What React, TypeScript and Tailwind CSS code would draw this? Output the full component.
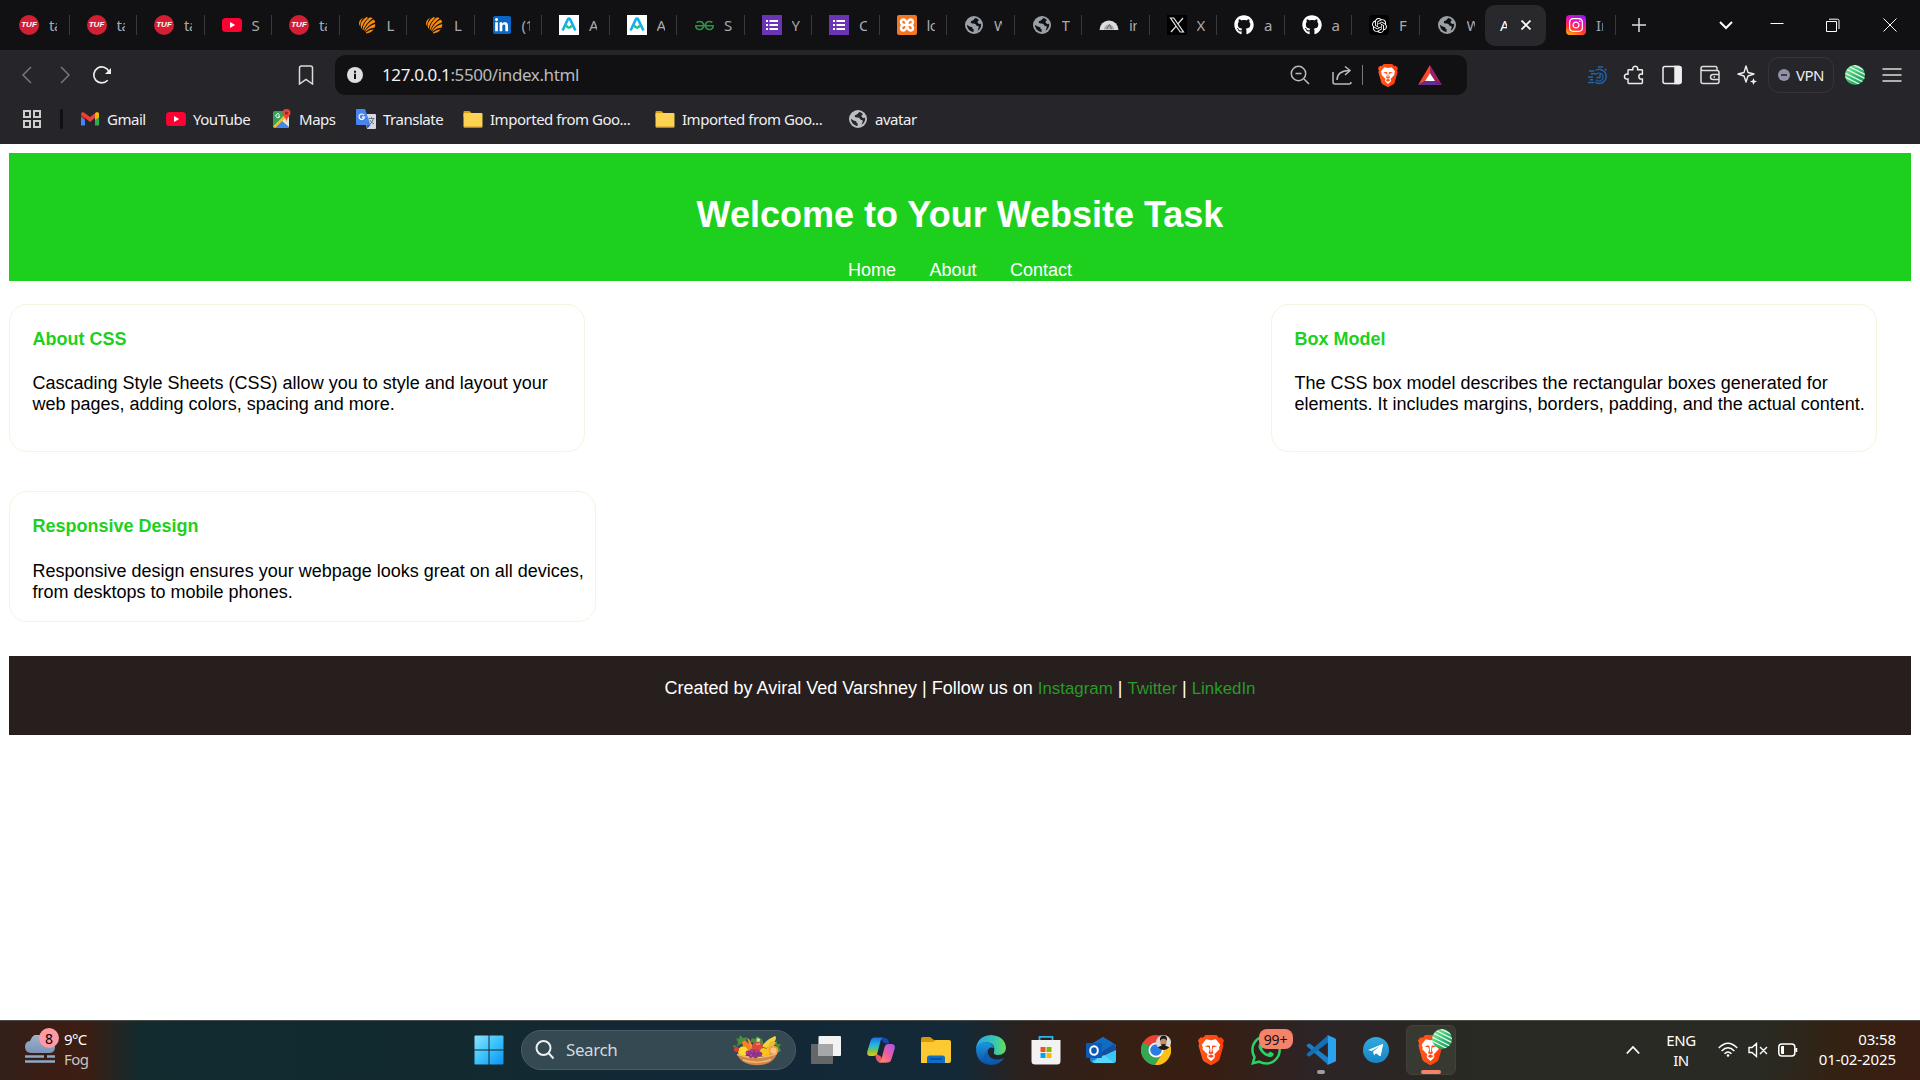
import React from "react";
import { FaGithub, FaLinkedinIn, FaInstagram } from "react-icons/fa";
import { SiOpenai, SiXampp, SiGeeksforgeeks, SiWhatsapp } from "react-icons/si";
import { PiPuzzlePiece } from "react-icons/pi";

/* ---------- Brand marks ---------- */

const Tuf = () => (
  <div className="flex size-5 items-center justify-center rounded-full bg-[#d21f34]">
    <span className="font-['Liberation_Sans'] text-[8px] font-bold italic leading-none text-white">TUF</span>
  </div>
);

const YouTube = () => (
  <svg viewBox="0 0 20 20" className="size-5">
    <rect y="3" width="20" height="14" rx="3.5" fill="#ff0033" />
    <path d="M8 7v6l5.2-3z" fill="#fff" />
  </svg>
);

const Shell = () => (
  <svg viewBox="0 0 20 20" className="size-5" fill="#f98a0c">
    <path d="M2.300 10Q1 5 6.500 2.500 3 6 3.200 11z" />
    <path d="M4 13Q2.500 6 10 1.800 11 2.500 10.500 3.500 5.500 8 4.800 13.500z" />
    <path d="M5.500 14.500Q6 8 12.500 2.500 15 2 15.500 3.500 9 8 6.300 15z" />
    <path d="M7 15.300Q10 8 16.500 4.500 18.300 5.500 18 7.500 11.500 9.500 7.700 15.800z" />
    <path d="M8.200 16.300Q12 10.500 18.200 9 18.500 11 17.500 12.800 12.500 13 8.700 16.700z" />
    <path d="M9 17.500Q12.500 14.500 16.800 14.200 14 18 9 18.500z" />
  </svg>
);

const LinkedIn = () => (
  <div className="flex size-[18px] items-center justify-center rounded-[2px] bg-[#0a66c2] text-white">
    <FaLinkedinIn size={15} />
  </div>
);

const ApnaA = () => (
  <svg viewBox="0 0 20 20" className="size-5">
    <rect width="20" height="20" fill="#fff" />
    <path d="M3.600 15.500 8.800 4.500Q10 2.800 11.200 4.500L16.400 15.500" fill="none" stroke="#12aef2" strokeWidth="2.600" />
    <path d="M7.200 10.500q2.800 4.500 5.600 0" fill="none" stroke="#1cc68a" strokeWidth="2.600" />
  </svg>
);

const Forms = () => (
  <svg viewBox="0 0 20 20" className="size-5">
    <rect width="20" height="20" fill="#6a35b5" />
    <path d="M4 5h2v2H4zM7.5 5H16v2H7.5zM4 9h2v2H4zM7.5 9H16v2H7.5zM4 13h2v2H4zM7.5 13H16v2H7.5z" fill="#fff" />
  </svg>
);

const Xampp = () => (
  <div className="flex size-5 items-center justify-center rounded-[2px] bg-[#f37623]">
    <svg viewBox="0 0 20 20" className="size-5" fill="none" stroke="#fff" strokeWidth="2.400">
      <path d="M6.500 4.500q-2.500 0-2.500 2.500t3 2.900h6q3-.4 3-2.900t-2.500-2.500Q11 4.500 10 10q-1 5.500-3.500 5.500T4 13t3-3.100M13 9.900q3 .6 3 3.100t-2.500 2.500Q11 15.500 10 10 9 4.500 6.500 4.500" />
    </svg>
  </div>
);

const Globe = ({ fill = "#9aa0a6", hole = "#111113" }: { fill?: string; hole?: string }) => (
  <svg viewBox="0 0 20 20" className="size-5">
    <circle cx="10" cy="10" r="9" fill={fill} />
    <path
      d="M11.5 2.9C9.8 3.6 10 5 8.8 5.6c-1 .5-1.8.2-2 1.2-.2 1.1.5 1.7 1.6 1.7 1.5 0 3.2 0 3.6 1.4.3 1.2 2 .6 2.6 1.6.6 1.1-.5 1.9-.6 2.9-.1.9-.7 1.6-1.4 2 3-1.200 5-4.400 4.500-7.600-.5 0-1 .3-1.700.1-1.200-.300-2.100-1.100-1.800-2.100.2-.8 1.200-1 1.300-1.700-.8-1-2.100-1.900-3.400-2.200zM2.900 9.700c.3 3.800 3 6.900 6.700 7.400 0-.9-.1-1.700.3-2.500-1.200-.4-1.700-1.100-1.600-2.300-1.600-.3-3.400-1-5.400-2.600z"
      fill={hole}
    />
  </svg>
);

const Dome = () => (
  <svg viewBox="0 0 20 20" className="size-5">
    <path d="M0.500 15a9.500 9.500 0 0 1 19 0z" fill="#dcdcdc" />
    <path d="M5 14.500a5 5 0 0 1 10 0z" fill="#aaa" />
    <path d="M7.500 14 10.500 9.500 12.500 14" stroke="#666" fill="none" />
  </svg>
);

const XLogo = () => (
  <svg viewBox="0 0 20 20" className="size-5">
    <rect width="20" height="20" fill="#000" />
    <path d="M3.500 3h3.300l9.700 14h-3.300zM16 3l-5.500 6.300M9 11.300 4 17" fill="none" stroke="#e8e8e8" strokeWidth="1.200" />
  </svg>
);

const OpenAi = () => (
  <div className="flex size-5 items-center justify-center rounded bg-black text-white">
    <SiOpenai size={15} />
  </div>
);

const Insta = () => (
  <div className="flex size-5 items-center justify-center rounded-[4px] bg-[linear-gradient(200deg,#8a1cf5_5%,#f70fa8_40%,#ff3a2c_68%,#ffc400_100%)] text-white">
    <FaInstagram size={16} />
  </div>
);

const Brave = ({ w, h }: { w: number; h: number }) => (
  <svg viewBox="0 0 24 28" width={w} height={h} preserveAspectRatio="none">
    <defs>
      <linearGradient id="brave" x1="0" x2="1">
        <stop offset="0" stopColor="#ff5a1c" />
        <stop offset="1" stopColor="#ff3a0a" />
      </linearGradient>
    </defs>
    <path d="M7 0h10l2.500 2.500 2-.5L24 5l-1 3 .5 2-3.500 12.500q-.5 1.500-2 2.500l-5 2.800q-1 .4-2 0L6 25q-1.500-1-2-2.500L.5 10 1 8 0 5l2.500-3 2 .5z" fill="url(#brave)" />
    <path d="M7.500 4 12 4.800 16.500 4l4 5-1 2.500.3 1.700-4.800 5 .8 1.500-.8 2-3 2.500-3-2.500-.8-2 .8-1.500-4.800-5 .3-1.700-1-2.500z" fill="#fff" />
    <path d="M6 10.500l4 1 .7 2-1 3.500 2.300 1 2.300-1-1-3.500.7-2 4-1-3-.8-3 .3-3-.3zM9 19.500l3-1.200 3 1.200-3 2z" fill="#ff4a14" />
    <path d="M10.800 8h2.400L12.500 16h-1z" fill="#fff" />
  </svg>
);

const Striped = () => (
  <svg viewBox="0 0 20 20" className="size-5">
    <defs>
      <linearGradient id="stripeFill" x1="0" x2="1" y2="1">
        <stop stopColor="#9cf0a5" />
        <stop offset=".5" stopColor="#35bd72" />
        <stop offset="1" stopColor="#168b55" />
      </linearGradient>
      <clipPath id="stripeClip"><circle cx="10" cy="10" r="10" /></clipPath>
    </defs>
    <g clipPath="url(#stripeClip)">
      <rect width="20" height="20" fill="url(#stripeFill)" />
      <path d="M5-2 23 7M1 0 22 10.500M-1 3 21 14M-2 7 20 18M-2 11 16 20" stroke="#e2fbe6" strokeWidth="1.300" />
    </g>
  </svg>
);

/* ---------- Tab strip ---------- */

const tabs: { icon: React.ReactNode; text: string }[] = [
  { icon: <Tuf />, text: "ta" },
  { icon: <Tuf />, text: "ta" },
  { icon: <Tuf />, text: "ta" },
  { icon: <YouTube />, text: "S" },
  { icon: <Tuf />, text: "ta" },
  { icon: <Shell />, text: "L" },
  { icon: <Shell />, text: "L" },
  { icon: <LinkedIn />, text: "(1" },
  { icon: <ApnaA />, text: "A" },
  { icon: <ApnaA />, text: "A" },
  { icon: <SiGeeksforgeeks size={19} color="#2f8d46" />, text: "S" },
  { icon: <Forms />, text: "Y" },
  { icon: <Forms />, text: "C" },
  { icon: <Xampp />, text: "lo" },
  { icon: <Globe />, text: "W" },
  { icon: <Globe />, text: "T" },
  { icon: <Dome />, text: "in" },
  { icon: <XLogo />, text: "X" },
  { icon: <FaGithub size={20} color="#fff" />, text: "a" },
  { icon: <FaGithub size={20} color="#fff" />, text: "a" },
  { icon: <OpenAi />, text: "F" },
  { icon: <Globe />, text: "W" },
];

function TabStrip() {
  return (
    <div className="flex h-[50px] items-center bg-[#111113] pl-[2px]">
      {tabs.map((t, i) => (
        <div key={i} className="flex w-[67.5px] shrink-0 items-center pl-[17px]">
          <div className="flex size-5 shrink-0 items-center justify-center">{t.icon}</div>
          <span className="ml-[10px] w-[8px] overflow-hidden whitespace-nowrap text-[15px] leading-5 tracking-[-0.5px] text-[#a9a9ad]">{t.text}</span>
          {i < 21 && <div className="ml-auto h-5 w-px bg-[#3a3a3e]" />}
        </div>
      ))}
      <div className="-ml-[2px] flex h-[41px] w-[61px] shrink-0 items-center rounded-[10px] bg-[#28282d] pl-[15px]">
        <span className="w-[7px] overflow-hidden text-[15px] leading-5 text-white">A</span>
        <svg viewBox="0 0 10 10" className="ml-[14px] size-[10px]" stroke="#fff" strokeWidth="1.7"><path d="M.5.500 9.500 9.500M9.500.500.500 9.500" /></svg>
      </div>
      <div className="flex w-[70px] shrink-0 items-center pl-5">
        <Insta />
        <span className="ml-[10px] w-[7px] overflow-hidden whitespace-nowrap text-[15px] leading-5 text-[#a4a4a8]">In</span>
        <div className="ml-auto h-5 w-px bg-[#3a3a3e]" />
      </div>
      <svg viewBox="0 0 14 14" className="ml-[16px] size-[14px]" stroke="#ddd" strokeWidth="1.500"><path d="M7 0v14M0 7h14" /></svg>
      <svg viewBox="0 0 14 14" className="ml-[73px] size-[14px]" stroke="#fff" strokeWidth="2" fill="none"><path d="M1 4l6 6 6-6" /></svg>
      <svg viewBox="0 0 14 14" className="ml-[37px] size-[14px]" stroke="#fff"><path d="M.5 5.500h13" /></svg>
      <svg viewBox="0 0 14 14" className="ml-[42px] size-[14px]" stroke="#fff" fill="none"><path d="M.5 3.500h10v10H.5zM3 1.200h8.500q1.500 0 1.500 1.500V11" /></svg>
      <svg viewBox="0 0 14 14" className="ml-[43px] size-[14px]" stroke="#fff"><path d="M.5.500l13 13M13.500.500l-13 13" /></svg>
    </div>
  );
}

/* ---------- Address row ---------- */

function Toolbar() {
  return (
    <div className="flex h-[50px] items-center pl-[20px]">
      <svg viewBox="0 0 14 20" className="h-5 w-[14px]" stroke="#77777c" strokeWidth="1.500" fill="none"><path d="M11 2 3 10l8 8" /></svg>
      <svg viewBox="0 0 14 20" className="ml-[24px] h-5 w-[14px]" stroke="#77777c" strokeWidth="1.500" fill="none"><path d="M3 2l8 8-8 8" /></svg>
      <svg viewBox="0 0 20 20" className="ml-[20px] size-5" stroke="#eee" strokeWidth="1.700" fill="none">
        <path d="M15.700 15.300A8 8 0 1 1 17 6.500" /><path d="M19 3v6h-6z" fill="#eee" stroke="none" />
      </svg>
      <svg viewBox="0 0 16 20" className="ml-[186px] h-5 w-4" stroke="#ddd" strokeWidth="1.500" fill="none"><path d="M1.500 3q0-2 2-2h9q2 0 2 2v16L8 14.500 1.500 19z" /></svg>
      <div className="ml-[21px] flex h-10 w-[1132px] items-center rounded-[10px] bg-[#111113] pl-[12px]">
        <svg viewBox="0 0 16 16" className="size-4"><circle cx="8" cy="8" r="8" fill="#dddde2" /><path d="M7 6.800h2V12H7zM7 3.700h2v2H7z" fill="#111" /></svg>
        <div className="ml-[19px] w-[220px] whitespace-nowrap text-[17px] leading-6 tracking-[-0.4px] text-[#b9b9bf]">
          <span className="text-[#f0f0f2]">127.0.0.1</span>:5500/index.html
        </div>
        <svg viewBox="0 0 20 20" className="ml-[688px] size-5" stroke="#bbb" strokeWidth="1.500" fill="none"><circle cx="8.500" cy="8.500" r="7.200" /><path d="M14 14l5 5M5.500 8.500h6" /></svg>
        <svg viewBox="0 0 20 20" className="ml-[22px] size-5" stroke="#bbb" strokeWidth="1.500" fill="none"><path d="M1 7v10q0 2 2 2h14q2 0 2-2M5 15q0-9 12-9.500M13 1.500l5 4-5 4.500" /></svg>
        <div className="ml-[10px] h-5 w-px bg-[#77777c]" />
        <div className="ml-[15px]"><Brave w={20} h={23} /></div>
        <svg viewBox="0 0 24 20" className="ml-[20px] h-5 w-6"><path d="M12 0 0 20 7 16 12 8z" fill="#ff4724" /><path d="M12 0 24 20l-7-4-5-8z" fill="#9e1f63" /><path d="M0 20h24l-7-4H7z" fill="#662d91" /><path d="M12 8l5 8H7z" fill="#fff" /></svg>
      </div>
      <svg viewBox="0 0 20 20" className="ml-[121px] size-5" stroke="#1f67ad" strokeWidth="1.400" fill="none"><path d="M7.500 5.500A7 7 0 1 1 7 17M1 6h5M3 8.800h5M0 12h5M2 14.800h3M0 17.500h6M12 9v3.500H8.500M10 2h5M17 4l1.500 1.500" /><path d="M8 9.500a4 4 0 1 1 0 5" strokeWidth="1.200" /></svg>
      <PiPuzzlePiece size={23} color="#eee" className="ml-[15px]" />
      <svg viewBox="0 0 20 20" className="ml-[16px] size-5" fill="none" stroke="#eee" strokeWidth="1.500"><rect x="1" y="1.500" width="18" height="17" rx="2" /><path d="M13 1.500h4q2 0 2 2v13q0 2-2 2h-4z" fill="#eee" /></svg>
      <svg viewBox="0 0 20 20" className="ml-[18px] size-5" fill="none" stroke="#ddd" strokeWidth="1.500"><path d="M17 5.500V3q0-1.500-1.500-1.500H3Q1 1.500 1 3.500v13q0 2 2 2h14q2 0 2-2v-9q0-2-2-2H3q-2 0-2-2M19 9.500h-6q-2.500 0-2.500 2.500t2.500 2.500h6M13.500 12h1.500" /></svg>
      <svg viewBox="0 0 20 20" className="ml-[17px] size-5" fill="none" stroke="#eee" strokeWidth="1.400"><path d="M9 1l2 6.500L17 9l-6 2-2 6-2-6-6-2 6-1.500z" strokeLinejoin="round" /><path d="M16.500 13l1 2.500 2.500 1-2.500 1-1 2.500-1-2.500-2.500-1 2.500-1z" fill="#eee" stroke="none" /></svg>
      <div className="ml-[11px] flex h-9 w-[66px] items-center rounded-[11px] border border-[#34343a] pl-[9px]">
        <svg viewBox="0 0 12 12" className="size-3"><circle cx="6" cy="6" r="6" fill="#9090a8" /><path d="M3 6h6" stroke="#222" strokeWidth="1.500" /></svg>
        <span className="ml-[6px] text-[15px] leading-5 tracking-[-0.5px] text-[#eee]">VPN</span>
      </div>
      <div className="ml-[11px]"><Striped /></div>
      <svg viewBox="0 0 20 20" className="ml-[17px] size-5" stroke="#ddd" strokeWidth="1.600"><path d="M.5 4h19M.5 10h19M.5 16h19" /></svg>
    </div>
  );
}

/* ---------- Bookmarks row ---------- */

const Gmail = () => (
  <svg viewBox="0 0 20 20" className="size-5">
    <path d="M1 5v11.500h4V8z" fill="#4285f4" /><path d="M15 8v8.500h4V5z" fill="#34a853" />
    <path d="M1 5.500V8l4 3V6z" fill="#c5221f" /><path d="M15 6v5l4-3V5.500z" fill="#fbbc04" />
    <path d="M1 5.500q0-3 3-2l6 4.500 6-4.500q3-1 3 2L10 13z" fill="#ea4335" />
    <path d="M15 4.500l1-.9q3-1 3 2.200L15 9z" fill="#fbbc04" />
  </svg>
);
const Maps = () => (
  <svg viewBox="0 0 20 20" className="size-5">
    <rect x="1" y="2" width="16" height="17" rx="1.500" fill="#34a058" />
    <path d="M2 19 9.500 11.500 17 19z" fill="#4285f4" /><path d="M9.500 11.500 17 4v14z" fill="#e3e3e3" />
    <path d="M1 17.500 14 4.500l2 2L3 19z" fill="#fbc116" />
    <path d="M14.500 0a4 4 0 0 0-4 4c0 3 3.500 4 4 9 .5-5 4-6 4-9a4 4 0 0 0-4-4z" fill="#ea4335" /><circle cx="14.500" cy="4" r="1.500" fill="#8c2a20" />
    <path d="M7.500 5.500a2 2 0 1 0 .4 1.500H6" stroke="#fff" fill="none" />
  </svg>
);
const Translate = () => (
  <svg viewBox="0 0 20 20" className="size-5">
    <path d="M8 5h11q1 0 1 1v13q0 1-1 1h-8z" fill="#d6dae0" /><path d="M1 0h8l5.500 16H1q-1 0-1-1V1q0-1 1-1z" fill="#4b83ee" />
    <path d="M10.500 16H14.500L11.500 19.500z" fill="#2f5bc4" />
    <path d="M8 6.200a2.700 2.700 0 1 0 .4 2H6" stroke="#fff" strokeWidth="1.200" fill="none" /><path d="M12.500 9.500h6M15.500 8v1.500M17.500 9.500q-1 4-3.500 5.500M14 11q1.500 3 4 4" stroke="#697684" fill="none" />
  </svg>
);
const Folder = () => (
  <svg viewBox="0 0 20 20" className="size-5">
    <path d="M.5 3Q.500 2 1.500 2h5l2 2v4H.5z" fill="#d99e0c" /><rect x=".5" y="4" width="19" height="14.500" rx="1" fill="#fcd253" /><path d="M1 17.700h18" stroke="#dcae36" />
  </svg>
);

const bookmarks: { icon: React.ReactNode; text: string; cls: string }[] = [
  { icon: <Gmail />, text: "Gmail", cls: "w-[86px]" },
  { icon: <YouTube />, text: "YouTube", cls: "w-[106px]" },
  { icon: <Maps />, text: "Maps", cls: "w-[84px]" },
  { icon: <Translate />, text: "Translate", cls: "w-[107px]" },
  { icon: <Folder />, text: "Imported from Goo...", cls: "w-[192px]" },
  { icon: <Folder />, text: "Imported from Goo...", cls: "w-[193px]" },
  { icon: <Globe fill="#bcc0c4" hole="#28282c" />, text: "avatar", cls: "w-[90px]" },
];

function Bookmarks() {
  return (
    <div className="flex h-[44px] items-center pb-[6px] pl-[22px]">
      <svg viewBox="0 0 20 20" className="size-5" fill="none" stroke="#ccc" strokeWidth="2"><path d="M2 2h6v6H2zM12 2h6v6h-6zM2 12h6v6H2zM12 12h6v6h-6z" /></svg>
      <div className="ml-[18px] h-5 w-[3px] rounded bg-[#111113]" />
      <div className="ml-[17px] flex">
        {bookmarks.map((b, i) => (
          <div key={i} className={`flex items-center whitespace-nowrap ${b.cls}`}>
            {b.icon}
            <span className="ml-[7px] text-[15px] leading-5 tracking-[-0.48px] text-[#f0f0f2]">{b.text}</span>
          </div>
        ))}
      </div>
    </div>
  );
}

/* ---------- Web page ---------- */

function Card({ title, lines, cls }: { title: string; lines: string[]; cls: string }) {
  return (
    <section className={`whitespace-nowrap rounded-[18px] border border-[#f5f5dc] pl-[22.500px] ${cls}`}>
      <h3 className="text-[18px] font-bold leading-[21px] text-[#1ed01e]">{title}</h3>
      {lines.map((l) => (
        <p key={l} className="text-[18px] leading-[21px]">{l}</p>
      ))}
    </section>
  );
}

function WebPage() {
  return (
    <main className="h-[876px] bg-white px-[9px] pt-[9px] font-['Liberation_Sans',Arial,sans-serif] text-black">
      <header className="flex h-[128px] flex-col items-center bg-[#1ed01e] pt-[41px] text-white">
        <h1 className="text-[36px] font-bold leading-[41px]">Welcome to Your Website Task</h1>
        <nav className="mt-[25px] flex gap-[33.500px] text-[18px] leading-[21px]">
          <a>Home</a>
          <a>About</a>
          <a>Contact</a>
        </nav>
      </header>
      <div className="mt-[23px] flex justify-between pr-[34px]">
        <Card
          title="About CSS"
          cls="h-[148px] w-[576px] pt-[24px] [&>h3]:mb-[23px]"
          lines={["Cascading Style Sheets (CSS) allow you to style and layout your", "web pages, adding colors, spacing and more."]}
        />
        <Card
          title="Box Model"
          cls="h-[148px] w-[606px] pt-[24px] [&>h3]:mb-[23px]"
          lines={["The CSS box model describes the rectangular boxes generated for", "elements. It includes margins, borders, padding, and the actual content."]}
        />
      </div>
      <div className="mt-[39px]">
        <Card
          title="Responsive Design"
          cls="h-[131px] w-[587px] pt-[24px] [&>h3]:mb-[24px]"
          lines={["Responsive design ensures your webpage looks great on all devices,", "from desktops to mobile phones."]}
        />
      </div>
      <footer className="mt-[34px] h-[79px] bg-[#271e1e] pt-[22px] text-center text-[18px] leading-[21px] text-white">
        Created by Aviral Ved Varshney | Follow us on <a className="text-[16.875px] text-[#289b28]">Instagram</a> |{" "}
        <a className="text-[16.875px] text-[#289b28]">Twitter</a> | <a className="text-[16.875px] text-[#289b28]">LinkedIn</a>
      </footer>
    </main>
  );
}

/* ---------- Taskbar ---------- */

const Windows = () => (
  <svg viewBox="0 0 30 30" className="size-[30px]">
    <defs><linearGradient id="win" x1="0" x2="30" y1="0" y2="30" gradientUnits="userSpaceOnUse"><stop stopColor="#90e3ff" /><stop offset=".5" stopColor="#3cc2fb" /><stop offset="1" stopColor="#0a90f5" /></linearGradient></defs>
    <path d="M.5 1.500q0-1 1-1H14.500V14.500H.5zM15.500.500H28.500q1 0 1 1V14.500h-14zM.5 15.500h14v14H1.500q-1 0-1-1zM15.500 15.500h14v13q0 1-1 1h-13z" fill="url(#win)" />
  </svg>
);

const Basket = () => (
  <svg viewBox="0 0 50 32" className="h-8 w-[50px]">
    <path d="M2 14 1 11l4 1 1-4-2-4 3 1 1-4 3 3 4-1-1 4zM18 8l2-4 3 1 2-3 3 2 2 1 2 6zM40 10l5-3 0 3 4 0-2 3 2 4-4 2z" fill="#4c8f3a" />
    <path d="M8 18 14 11h30l2 8-20 4z" fill="#3d5e28" />
    <path d="M10 9q1-3 4-2l8 8-4 4-6-4z" fill="#f58220" /><path d="M15 4l2 1 4 8-3 0z" fill="#f79433" />
    <path d="M43 2q2 1 0 5l-8 7-5-1q2-6 13-11z" fill="#f4d23f" /><path d="M39 7l5 1-4 7-6 1z" fill="#e5bd3c" />
    <path d="M25 4l3 1-1 6-3 0z" fill="#d4e8aa" />
    <circle cx="25.500" cy="13" r="5.500" fill="#dc4a3a" /><path d="M24 10q2 1 4-.5" stroke="#f4a08e" strokeWidth="1.300" fill="none" />
    <circle cx="11" cy="17.500" r="5" fill="#ffd92e" />
    <path d="M28 18q0-4 4-4 3 1 6 0 2 4-1 8H29z" fill="#fbc21b" />
    <circle cx="41.500" cy="16.500" r="4.800" fill="#f79a3c" /><circle cx="41.500" cy="16.500" r="3" fill="#ffc380" />
    <circle cx="4.500" cy="15.500" r="2.500" fill="#e5382c" />
    <path d="M5 20q20 6 40-1-2 9-13 11.500-7 1.500-14 0Q8 28 5 20z" fill="#cf8746" />
    <path d="M5 20.500q20 6.500 40-1M11 26q14 4.500 28-.5" stroke="#efb673" fill="none" strokeWidth="1.500" />
    <g fill="#98308f"><circle cx="16" cy="19" r="2.400" /><circle cx="20" cy="17.500" r="2.400" /><circle cx="24.500" cy="18" r="2.400" /><circle cx="28" cy="20" r="2.300" /><circle cx="19" cy="21.500" r="2.400" /><circle cx="23.500" cy="22" r="2.400" /></g>
    <g fill="#c862bd"><circle cx="15.500" cy="18.500" r=".8" /><circle cx="20" cy="17" r=".8" /><circle cx="24.500" cy="17.500" r=".8" /><circle cx="19" cy="21" r=".8" /></g>
  </svg>
);

const TaskView = () => (
  <svg viewBox="0 0 30 30" className="size-[30px]"><rect y="9" width="22" height="20" rx="1" fill="#646668" /><rect x="7.500" y="1" width="22.500" height="20" rx="1" fill="#f3f3f3" /><rect x="7.500" y="9" width="14.500" height="12" fill="#a5a7a9" /></svg>
);

const Copilot = () => (
  <svg viewBox="0 0 30 30" className="size-[30px]">
    <defs>
      <linearGradient id="cpA" x1="0" x2="0" y1="0" y2="1"><stop stopColor="#1c72e0" /><stop offset=".4" stopColor="#20b4e8" /><stop offset=".7" stopColor="#72c552" /><stop offset="1" stopColor="#f2c513" /></linearGradient>
      <linearGradient id="cpB" x1="1" x2="0" y1="0" y2="1"><stop stopColor="#a458f5" /><stop offset=".5" stopColor="#ee5ca0" /><stop offset="1" stopColor="#ff9b52" /></linearGradient>
    </defs>
    <path d="M8 3h11q2.500 0 3.500 3l.7 2.500H20Q18 8 17 6.500L15 4z" fill="#1848ae" />
    <path d="M9 18l1 5.500Q10.800 27 14 27.500h7l-5-3-1-3z" fill="#e8586a" />
    <path d="M18 2.500H8.500q-3 0-4 3.500L1.300 16.500Q.500 21 4.500 21H8q2.500 0 3.300-2.700L14.500 6q1-3.500 3.500-3.500z" fill="url(#cpA)" />
    <path d="M12 27.500h9.500q3 0 4-3.500l3.200-10.500Q29.500 9 25.500 9H22q-2.500 0-3.300 2.700L15.500 24q-1 3.500-3.500 3.500z" fill="url(#cpB)" />
  </svg>
);

const Explorer = () => (
  <svg viewBox="0 0 30 30" className="size-[30px]">
    <path d="M0 4q0-2 2-2h7l4 3h4v8H0z" fill="#dc9606" /><path d="M0 7h12l3-2h13q2 0 2 2v19q0 2-2 2H0z" fill="#fdc932" />
    <path d="M6 23q0-2.500 2.500-2.500h13Q24 20.500 24 23v5H6z" fill="#0c6fc5" /><path d="M9 24h12" stroke="#07498a" strokeWidth="1.500" />
  </svg>
);

const Edge = () => (
  <svg viewBox="0 0 30 30" className="size-[30px]">
    <defs>
      <linearGradient id="edA" x1="0" x2="1"><stop stopColor="#28a8e8" /><stop offset=".6" stopColor="#35c3b8" /><stop offset="1" stopColor="#66e052" /></linearGradient>
      <linearGradient id="edB" x1="0" x2="0" y1="0" y2="1"><stop stopColor="#1a99e2" /><stop offset="1" stopColor="#0b4da2" /></linearGradient>
    </defs>
    <path d="M0 14Q1 1 15 0q14 1 15 13-.5 7-8 7-5 0-4-3Q20 8 10 7 3 8 0 14z" fill="url(#edA)" />
    <path d="M0 15q1-8 9-8 7 0 9 6-5-2-6.500 3 0 7 8 8.500 4 .5 8.500-1.500Q24 30 15 30 1 29 0 15z" fill="url(#edB)" />
    <path d="M11.500 16Q5 20 11 26q4 4 9 3-9-2-8.500-13z" fill="#115eb3" />
  </svg>
);

const Store = () => (
  <svg viewBox="0 0 30 30" className="size-[30px]">
    <path d="M8.500 6V1.800h13V6" stroke="#27b6f2" strokeWidth="1.800" fill="none" /><path d="M.5 5h29v21q0 3.500-3.500 3.500H4Q.5 29.500.5 26z" fill="#f2f2f2" />
    <path d="M9.500 12h5v5h-5z" fill="#f25022" /><path d="M15.500 12h5v5h-5z" fill="#7fba00" /><path d="M9.500 18h5v5h-5z" fill="#00a4ef" /><path d="M15.500 18h5v5h-5z" fill="#ffb900" />
  </svg>
);

const Outlook = () => (
  <svg viewBox="0 0 30 30" className="size-[30px]">
    <path d="M4 10 17 2l13 8v15q0 3-3 3H8q-4 0-4-4z" fill="#1683d9" /><path d="M7 9 17 2l11 7-10 7z" fill="#0f6cc5" /><path d="M15 17 30 10v15q0 3-3 3H8z" fill="#38c8f5" /><path d="M15 17 28 9l2 2v4L15 22z" fill="#164f9f" /><path d="M6 26l12-6 10 8H8z" fill="#6ee2fc" opacity=".6" />
    <rect y="8" width="16" height="15" rx="1" fill="#0c59b8" /><ellipse cx="8" cy="15.500" rx="3.800" ry="4.300" fill="none" stroke="#fff" strokeWidth="2" />
  </svg>
);

const Chrome = () => (
  <svg viewBox="0 0 30 30" className="size-[30px]">
    <defs><clipPath id="avatar"><circle cx="22.500" cy="7.500" r="7.500" /></clipPath></defs>
    <circle cx="15" cy="15" r="15" fill="#ea4335" />
    <path d="M2 7.500A15 15 0 0 0 14 30L21 18.500 15 15z" fill="#34a853" /><path d="M28 7.500A15 15 0 0 1 14 30L21.500 18 15 7.500z" fill="#fbc116" />
    <circle cx="15" cy="15" r="7.500" fill="#fff" /><circle cx="15" cy="15" r="5.800" fill="#2c7be5" />
    <g clipPath="url(#avatar)">
      <rect x="15" width="15" height="15" fill="#ddd8d6" /><path d="M15 15q1-4 7.500-4.500Q29 11 30 15z" fill="#181818" /><ellipse cx="22.500" cy="6.800" rx="3.200" ry="4.600" fill="#c28d6b" /><path d="M19 6q-.5-5.500 3.500-5.500T26 6q-1-2.500-3.500-2.500T19 6zM20 9.500q2.500-1 5 0-1 2.500-2.500 2.500T20 9.500z" fill="#201713" />
    </g>
  </svg>
);

const VsCode = () => (
  <svg viewBox="0 0 30 30" className="size-[30px]">
    <path d="M1 9.800 2.300 8.700q.8-.6 1.600 0L22 22.500v7.200L.9 11.200q-.7-.7.1-1.400z" fill="#1b7fc7" />
    <path d="M1 20.200 2.300 21.300q.8.600 1.600 0L22 7.500V.3L.9 18.800q-.7.700.1 1.400z" fill="#1470b4" />
    <path d="M22 .3 29 3.300q1 .5 1 1.500v20.400q0 1-1 1.500l-7 3q-.5.200-1-.3.900.2.900-1V1.600q0-1.200-.9-1 .5-.5 1-.3z" fill="#2ba2ee" />
  </svg>
);

const Telegram = () => (
  <svg viewBox="0 0 26 26" className="size-[26px]">
    <defs><linearGradient id="tg" x1="0" x2="0" y1="0" y2="1"><stop stopColor="#32a9dc" /><stop offset="1" stopColor="#1686c6" /></linearGradient></defs>
    <circle cx="13" cy="13" r="13" fill="url(#tg)" /><path d="M5 13 19.500 7q.800-.2.600.7L17.800 18.500q-.3.900-1.200.4L13 16.200l-2 2-1-3.700 7-5.500-8.500 5z" fill="#fff" />
  </svg>
);

const WhatsApp = () => (
  <div className="relative">
    <SiWhatsapp size={30} color="#25d366" />
    <div className="absolute -top-[6px] left-[8px] flex h-5 w-[34px] items-center justify-center rounded-[8px] bg-[#f5826a] text-[14px] tracking-[-0.1px] text-[#1c0d09]">99+</div>
  </div>
);

const apps = [<TaskView />, <Copilot />, <Explorer />, <Edge />, <Store />, <Outlook />, <Chrome />, <Brave w={26} h={30} />, <WhatsApp />, <VsCode />, <Telegram />];

function Taskbar() {
  return (
    <div className="flex h-[60px] items-center border-t border-[#4a4d48] bg-[linear-gradient(90deg,#33201b_0px,#3c1d13_60px,#3a1e14_90px,#112b2f_140px,#122a2f_460px,#122837_680px,#132938_960px,#2b211e_1020px,#361f14_1110px,#371e13_1220px,#2d2426_1310px,#2b2524_1390px,#292a23_1480px,#292a23_1760px,#342112_1840px,#3b1d12_1920px)] pb-px text-white">
      <div className="relative ml-[25px] h-[30px] w-[30px] shrink-0">
        <svg viewBox="0 0 30 30" className="size-[30px]"><defs><linearGradient id="cloud" x1="0" x2="0" y1="0" y2="1"><stop stopColor="#a3b3c4" /><stop offset="1" stopColor="#7994bb" /></linearGradient></defs><path d="M6 18q-6-.5-6-6t5-6Q7-1 14-1t9 7q7 0 7 6t-6 6z" fill="url(#cloud)" /><path d="M0 21.500h19M22 21.500h8M0 26.500h30" stroke="#8da9c5" strokeWidth="2.600" /></svg>
        <div className="absolute -top-[7px] left-[14px] flex size-5 items-center justify-center rounded-full bg-[#ff99a4] text-[14px] text-black">8</div>
      </div>
      <div className="ml-[9px] w-[60px] pb-[3px] text-[15px] leading-5 tracking-[-0.6px]">
        <div>9°C</div>
        <div className="text-[#c9c5c2]">Fog</div>
      </div>
      <div className="ml-[350px]"><Windows /></div>
      <div className="ml-[17px] flex h-10 w-[275px] items-center rounded-full border border-[#4b5d66] bg-[#344952] pl-[13px]">
        <svg viewBox="0 0 20 20" className="size-5" fill="none" stroke="#eee" strokeWidth="2"><circle cx="8.500" cy="8" r="7" /><path d="M13.500 13l5 5.500" /></svg>
        <span className="ml-[11px] w-[60px] text-[17px] tracking-[-0.4px] text-[#d3d8da]">Search</span>
        <div className="ml-[106px]"><Basket /></div>
      </div>
      <div className="ml-[2px] flex items-center">
        {apps.map((a, i) => (
          <div key={i} className="relative flex h-[50px] w-[55px] items-center justify-center">
            {a}
            {i === 9 && <div className="absolute bottom-[1px] h-1 w-2 rounded-full bg-[#a09c9e]" />}
          </div>
        ))}
        <div className="relative ml-[3px] flex h-[50px] w-[50px] items-center justify-center rounded-md border border-[#42423b] bg-[#383930]">
          <div className="pr-[2px]"><Brave w={25} h={30} /></div>
          <div className="absolute left-[25px] top-[3px]"><Striped /></div>
          <div className="absolute bottom-0 h-1 w-5 rounded-full bg-[#f5826a]" />
        </div>
      </div>
      <svg viewBox="0 0 14 10" className="ml-[170px] h-[10px] w-[14px]" stroke="#fff" strokeWidth="1.800" fill="none"><path d="M.8 8.500 7 2l6.200 6.500" /></svg>
      <div className="ml-[20px] w-[42px] pb-px text-center text-[15px] leading-5 tracking-[-0.4px]"><div>ENG</div><div>IN</div></div>
      <svg viewBox="0 0 20 16" className="ml-[16px] h-4 w-5" stroke="#fff" strokeWidth="1.500" fill="none"><path d="M.8 6q9.200-9.500 18.400 0M3.600 9q6.400-6.500 12.800 0M6.500 11.800q3.500-3.500 7 0" /><circle cx="10" cy="13.500" r="1.300" fill="#fff" stroke="none" /></svg>
      <svg viewBox="0 0 20 16" className="ml-[10px] h-4 w-5" stroke="#fff" strokeWidth="1.400" fill="none"><path d="M1 5.500h3L8.500 1.500v13L4 10.500H1zM12 5l7 7M19 5l-7 7" /></svg>
      <svg viewBox="0 0 20 14" className="ml-[10px] h-[14px] w-5" stroke="#fff" strokeWidth="1.500" fill="none"><rect x=".8" y="1" width="16" height="12" rx="3" /><path d="M3 4q0-1 1-1h2v8H4q-1 0-1-1zM17.500 5h1.500v4h-1.500z" fill="#fff" stroke="none" /><path d="M18.500 5v4" /></svg>
      <div className="ml-auto mr-[24px] pb-[3px] text-right text-[15px] leading-5 tracking-[-0.1px]"><div>03:58</div><div>01-02-2025</div></div>
    </div>
  );
}

export default function App() {
  return (
    <div className="flex h-[1080px] w-[1920px] flex-col overflow-hidden bg-white font-['Noto_Sans','Open_Sans',sans-serif]">
      <TabStrip />
      <div className="h-[94px] bg-[#25252a]">
        <Toolbar />
        <Bookmarks />
      </div>
      <WebPage />
      <Taskbar />
    </div>
  );
}
